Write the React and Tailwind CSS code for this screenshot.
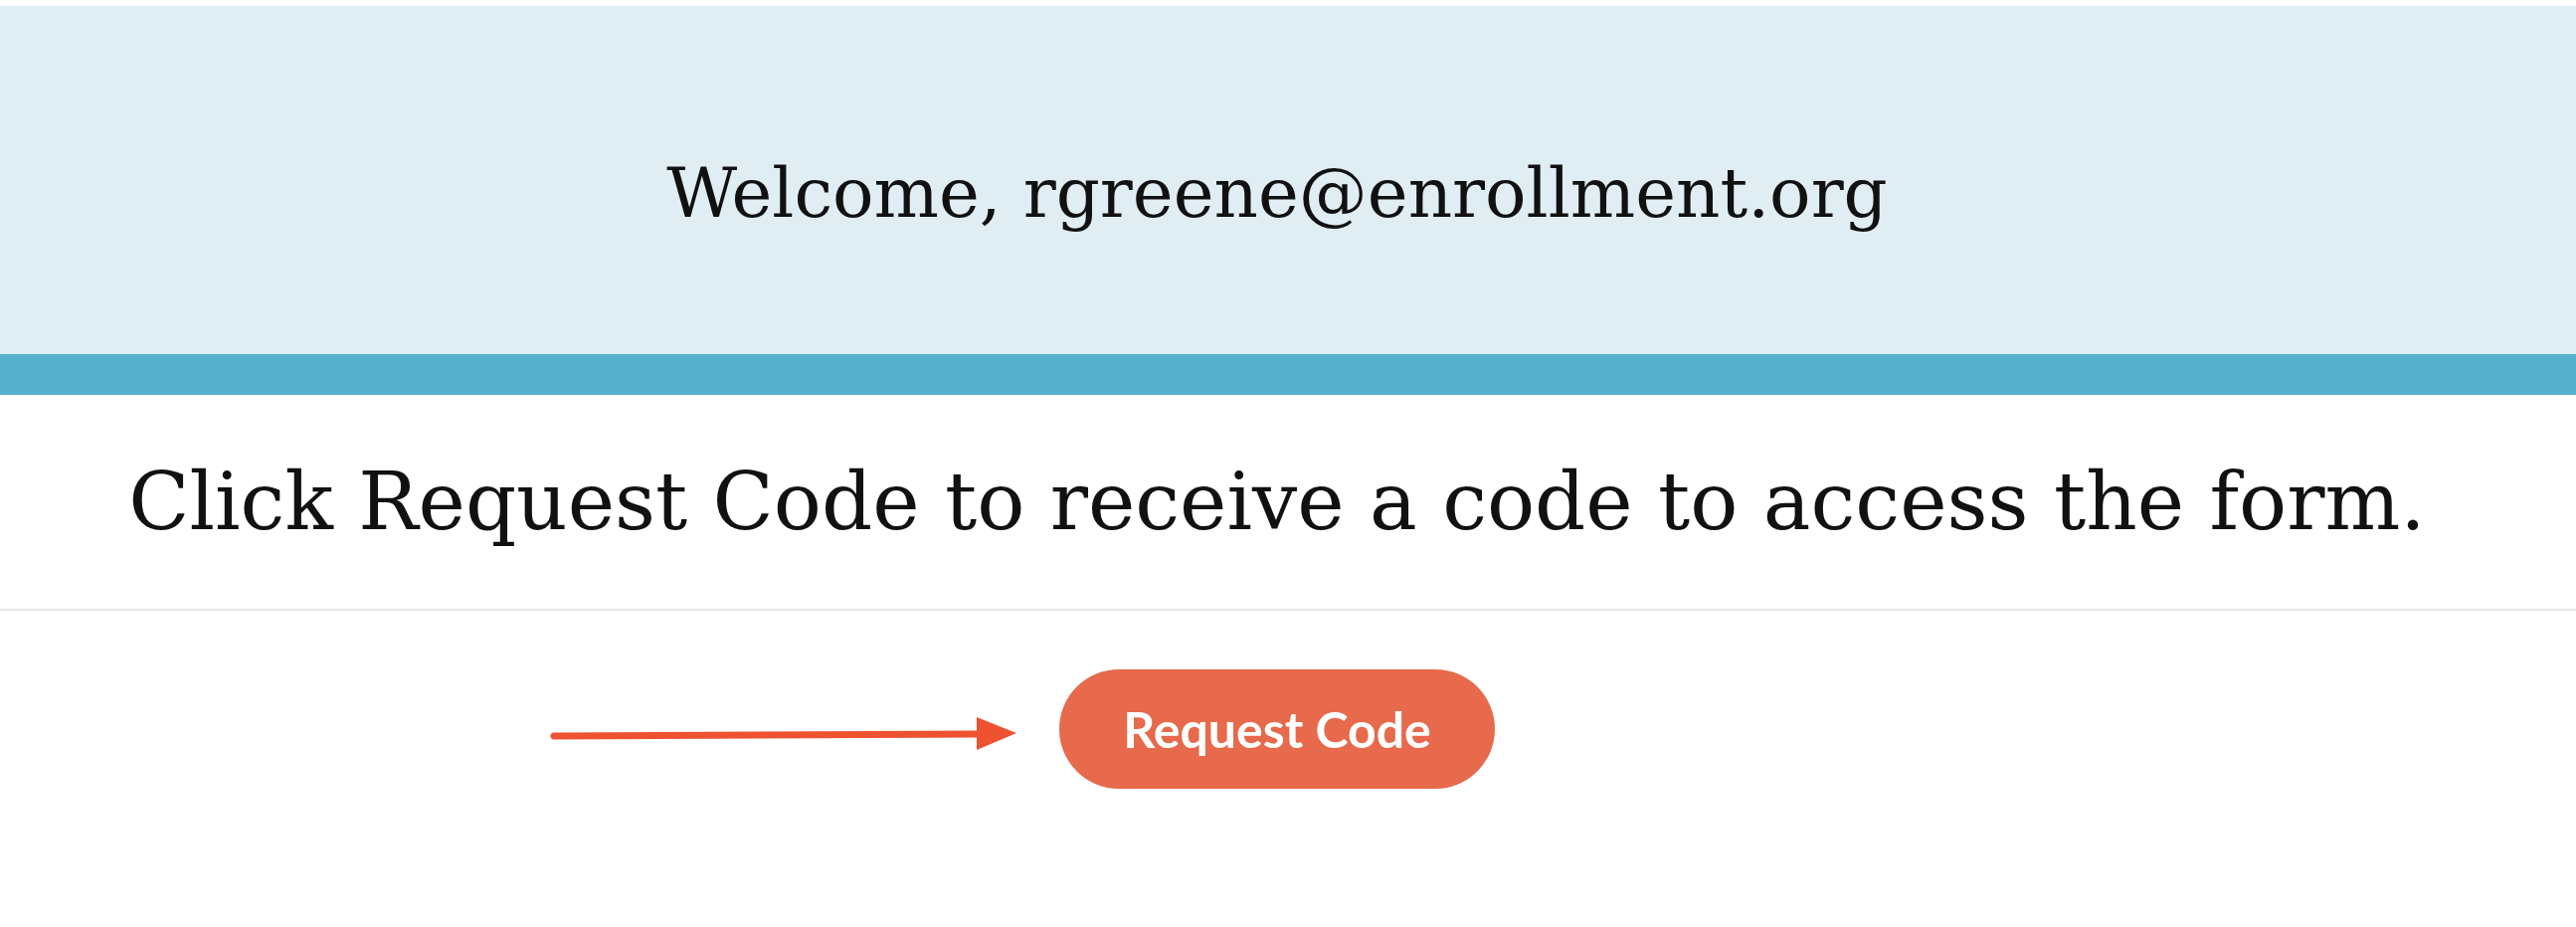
export default function App() {
  const serif = { fontFamily: '"DejaVu Serif", "Liberation Serif", serif' };
  return (
    <div className="min-h-[932px] w-full bg-white pt-[6px]">
      <div className="flex h-[350px] items-center justify-center bg-[#e0eef4] pr-[22px]">
        <h1 className="mt-[26px] text-[69px] leading-none font-normal text-[#111]" style={serif}>
          Welcome, rgreene@enrollment.org
        </h1>
      </div>
      <div className="h-[41px] bg-[#56b1cc]" />
      <div className="flex h-[215px] items-center justify-center pr-[22px]">
        <h2 className="text-[80px] leading-none font-normal text-[#111]" style={serif}>
          Click Request Code to receive a code to access the form.
        </h2>
      </div>
      <div className="h-[2px] bg-[#e5e5e5]" />
      <div className="relative flex justify-center pt-[59px] pr-[22px]">
        <svg className="absolute left-[550px] top-[100px]" width="480" height="50" viewBox="0 0 480 50">
          <line x1="7" y1="26" x2="434" y2="24" stroke="#ee5230" strokeWidth="7" strokeLinecap="round" />
          <polygon points="432,7 472,23 432,40" fill="#ee5230" />
        </svg>
        <button
          className="flex h-[120px] w-[438px] items-center justify-center rounded-full bg-[#e66a4b] text-[50px] font-bold text-white"
          style={{ fontFamily: 'Lato, "Open Sans", sans-serif' }}
        >
          Request Code
        </button>
      </div>
    </div>
  );
}
